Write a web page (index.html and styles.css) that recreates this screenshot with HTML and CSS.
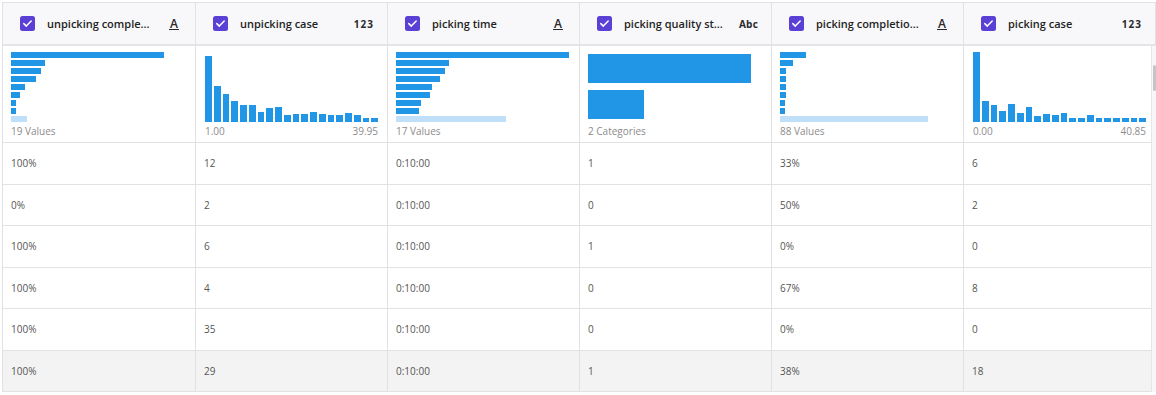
FILE: index.html
```html
<!DOCTYPE html>
<html lang="en">
<head>
<meta charset="utf-8">
<title>Columns</title>
<link rel="stylesheet" href="styles.css">
</head>
<body>
<div class="table">
  <div class="grid head">
    <div class="hcell"><svg class="cb" viewBox="0 0 15 15"><rect width="15" height="15" rx="2.5" fill="#5b40d6"/><path d="M3.8 7.6l2.5 2.5 4.9-5" fill="none" stroke="#fff" stroke-width="1.5" stroke-linecap="round" stroke-linejoin="round"/></svg><span class="title" title="unpicking completion rate">unpicking comple...</span><span class="type type-a">A</span></div>
    <div class="hcell"><svg class="cb" viewBox="0 0 15 15"><rect width="15" height="15" rx="2.5" fill="#5b40d6"/><path d="M3.8 7.6l2.5 2.5 4.9-5" fill="none" stroke="#fff" stroke-width="1.5" stroke-linecap="round" stroke-linejoin="round"/></svg><span class="title">unpicking case</span><span class="type type-num">123</span></div>
    <div class="hcell"><svg class="cb" viewBox="0 0 15 15"><rect width="15" height="15" rx="2.5" fill="#5b40d6"/><path d="M3.8 7.6l2.5 2.5 4.9-5" fill="none" stroke="#fff" stroke-width="1.5" stroke-linecap="round" stroke-linejoin="round"/></svg><span class="title">picking time</span><span class="type type-a">A</span></div>
    <div class="hcell"><svg class="cb" viewBox="0 0 15 15"><rect width="15" height="15" rx="2.5" fill="#5b40d6"/><path d="M3.8 7.6l2.5 2.5 4.9-5" fill="none" stroke="#fff" stroke-width="1.5" stroke-linecap="round" stroke-linejoin="round"/></svg><span class="title" title="picking quality status">picking quality st...</span><span class="type type-abc">Abc</span></div>
    <div class="hcell"><svg class="cb" viewBox="0 0 15 15"><rect width="15" height="15" rx="2.5" fill="#5b40d6"/><path d="M3.8 7.6l2.5 2.5 4.9-5" fill="none" stroke="#fff" stroke-width="1.5" stroke-linecap="round" stroke-linejoin="round"/></svg><span class="title" title="picking completion rate">picking completio...</span><span class="type type-a">A</span></div>
    <div class="hcell"><svg class="cb" viewBox="0 0 15 15"><rect width="15" height="15" rx="2.5" fill="#5b40d6"/><path d="M3.8 7.6l2.5 2.5 4.9-5" fill="none" stroke="#fff" stroke-width="1.5" stroke-linecap="round" stroke-linejoin="round"/></svg><span class="title">picking case</span><span class="type type-num">123</span></div>
  </div>

  <div class="body">
    <div class="grid">
      <!-- sparkline row -->
      <div class="scell">
        <div class="chart hbars">
          <div class="hb" style="width:153px"></div><div class="hb" style="width:34px"></div><div class="hb" style="width:30px"></div><div class="hb" style="width:25px"></div><div class="hb" style="width:14px"></div><div class="hb" style="width:9px"></div><div class="hb" style="width:5px"></div><div class="hb" style="width:5px"></div><div class="hb hb-other" style="width:16px"></div>
        </div>
        <div class="slabel">19 Values</div>
      </div>
      <div class="scell scell-hist">
        <div class="chart hist">
          <div class="vb" style="height:66px"></div><div class="vb" style="height:36px"></div><div class="vb" style="height:28px"></div><div class="vb" style="height:21px"></div><div class="vb" style="height:17px"></div><div class="vb" style="height:17px"></div><div class="vb" style="height:10px"></div><div class="vb" style="height:14px"></div><div class="vb" style="height:15px"></div><div class="vb" style="height:7px"></div><div class="vb" style="height:8px"></div><div class="vb" style="height:8px"></div><div class="vb" style="height:10px"></div><div class="vb" style="height:8px"></div><div class="vb" style="height:7px"></div><div class="vb" style="height:7px"></div><div class="vb" style="height:9px"></div><div class="vb" style="height:7px"></div><div class="vb" style="height:4px"></div><div class="vb" style="height:4px"></div>
        </div>
        <div class="slabel range"><span>1.00</span><span>39.95</span></div>
      </div>
      <div class="scell">
        <div class="chart hbars">
          <div class="hb" style="width:173px"></div><div class="hb" style="width:53px"></div><div class="hb" style="width:49px"></div><div class="hb" style="width:44px"></div><div class="hb" style="width:36px"></div><div class="hb" style="width:34px"></div><div class="hb" style="width:25px"></div><div class="hb" style="width:23px"></div><div class="hb hb-other" style="width:110px"></div>
        </div>
        <div class="slabel">17 Values</div>
      </div>
      <div class="scell">
        <div class="chart cats">
          <div class="cb-bar" style="width:163px"></div><div class="cb-bar" style="width:56px"></div>
        </div>
        <div class="slabel">2 Categories</div>
      </div>
      <div class="scell">
        <div class="chart hbars">
          <div class="hb" style="width:26px"></div><div class="hb" style="width:13px"></div><div class="hb" style="width:6px"></div><div class="hb" style="width:6px"></div><div class="hb" style="width:6px"></div><div class="hb" style="width:6px"></div><div class="hb" style="width:5px"></div><div class="hb" style="width:5px"></div><div class="hb hb-other" style="width:148px"></div>
        </div>
        <div class="slabel">88 Values</div>
      </div>
      <div class="scell scell-hist">
        <div class="chart hist">
          <div class="vb" style="height:70px"></div><div class="vb" style="height:21px"></div><div class="vb" style="height:17px"></div><div class="vb" style="height:11px"></div><div class="vb" style="height:18px"></div><div class="vb" style="height:9px"></div><div class="vb" style="height:15px"></div><div class="vb" style="height:6px"></div><div class="vb" style="height:8px"></div><div class="vb" style="height:7px"></div><div class="vb" style="height:9px"></div><div class="vb" style="height:4px"></div><div class="vb" style="height:4px"></div><div class="vb" style="height:7px"></div><div class="vb" style="height:4px"></div><div class="vb" style="height:4px"></div><div class="vb" style="height:4px"></div><div class="vb" style="height:4px"></div><div class="vb" style="height:4px"></div><div class="vb" style="height:4px"></div>
        </div>
        <div class="slabel range"><span>0.00</span><span>40.85</span></div>
      </div>

      <!-- data rows -->
      <div class="dcell">100%</div><div class="dcell">12</div><div class="dcell">0:10:00</div><div class="dcell">1</div><div class="dcell">33%</div><div class="dcell">6</div>
      <div class="dcell">0%</div><div class="dcell">2</div><div class="dcell">0:10:00</div><div class="dcell">0</div><div class="dcell">50%</div><div class="dcell">2</div>
      <div class="dcell">100%</div><div class="dcell">6</div><div class="dcell">0:10:00</div><div class="dcell">1</div><div class="dcell">0%</div><div class="dcell">0</div>
      <div class="dcell">100%</div><div class="dcell">4</div><div class="dcell">0:10:00</div><div class="dcell">0</div><div class="dcell">67%</div><div class="dcell">8</div>
      <div class="dcell">100%</div><div class="dcell">35</div><div class="dcell">0:10:00</div><div class="dcell">0</div><div class="dcell">0%</div><div class="dcell">0</div>
      <div class="dcell hover">100%</div><div class="dcell hover">29</div><div class="dcell hover">0:10:00</div><div class="dcell hover">1</div><div class="dcell hover">38%</div><div class="dcell hover">18</div>
    </div>
    <div class="scrollbar"><div class="thumb"></div></div>
  </div>
</div>
</body>
</html>
```
FILE: styles.css
```css
html, body {
  margin: 0;
  padding: 0;
  overflow: hidden;
  background: #fff;
}

body {
  font-family: "Open Sans", "Noto Sans", sans-serif;
  color: #555;
}

.table {
  margin: 2px 0 0 2px;
  border-left: 1px solid #e2e2e4;
  border-top: 1px solid #e2e2e4;
}

.grid {
  display: grid;
  grid-template-columns: 193px 192px 192px 192px 192px 192px;
}

/* header */
.head {
  background: #f8f8fa;
  border-bottom: 2px solid #e4e4e6;
}

.hcell {
  height: 41px;
  display: flex;
  align-items: center;
  gap: 12px;
  padding: 0 13px 0 17px;
  border-right: 1px solid #e2e2e4;
  box-sizing: border-box;
  min-width: 0;
}

.cb {
  width: 15px;
  height: 15px;
  flex: none;
}

.title {
  flex: 1;
  min-width: 0;
  font-size: 11px;
  font-weight: 600;
  color: #1f1f24;
  white-space: nowrap;
  overflow: hidden;
}

.type {
  flex: none;
  color: #2a2a2e;
  font-weight: 700;
}

.type-a {
  font-size: 12px;
  font-weight: 600;
  line-height: 11px;
  padding: 0 1px;
  margin-right: 3px;
  border-bottom: 1.5px solid #2a2a2e;
}

.type-num {
  font-size: 10px;
  letter-spacing: 1px;
}

.type-abc {
  font-size: 10px;
  letter-spacing: 0.2px;
}

/* body */
.body {
  position: relative;
}

.scell {
  height: 97px;
  box-sizing: border-box;
  padding: 6px 8px 0 8px;
  border-right: 1px solid #e2e2e4;
  border-bottom: 1px solid #e2e2e4;
  display: flex;
  flex-direction: column;
}

.scell-hist {
  padding-left: 9px;
  padding-right: 9px;
}

.chart {
  height: 70px;
  flex: none;
}

.hbars {
  display: flex;
  flex-direction: column;
  gap: 2px;
}

.hb {
  height: 6px;
  background: #2296e6;
}

.hb-other {
  background: #bfe0f8;
}

.hist {
  display: flex;
  align-items: flex-end;
  gap: 2px;
}

.vb {
  flex: 1;
  background: #2296e6;
}

.cats {
  display: flex;
  flex-direction: column;
  gap: 7px;
  padding-top: 2px;
  box-sizing: border-box;
}

.cb-bar {
  height: 29px;
  background: #2296e6;
}

.slabel {
  margin-top: 2px;
  font-size: 10px;
  line-height: 14px;
  color: #8c8c8c;
}

.range {
  display: flex;
  justify-content: space-between;
}

.dcell {
  height: 41.5px;
  box-sizing: border-box;
  padding-left: 8px;
  display: flex;
  align-items: center;
  font-size: 10px;
  color: #555;
  border-right: 1px solid #e2e2e4;
  border-bottom: 1px solid #e2e2e4;
}

.dcell.hover {
  background: #f3f3f3;
}

/* overlay scrollbar */
.scrollbar {
  position: absolute;
  top: 0;
  right: 0;
  width: 4px;
  height: 400px;
  background: #f7f7f7;
  border-left: 1px solid #e6e6e6;
}

.thumb {
  margin-top: 19px;
  margin-left: 1px;
  width: 3px;
  height: 26px;
  border-radius: 2px;
  background: #c4c4c4;
}
```
